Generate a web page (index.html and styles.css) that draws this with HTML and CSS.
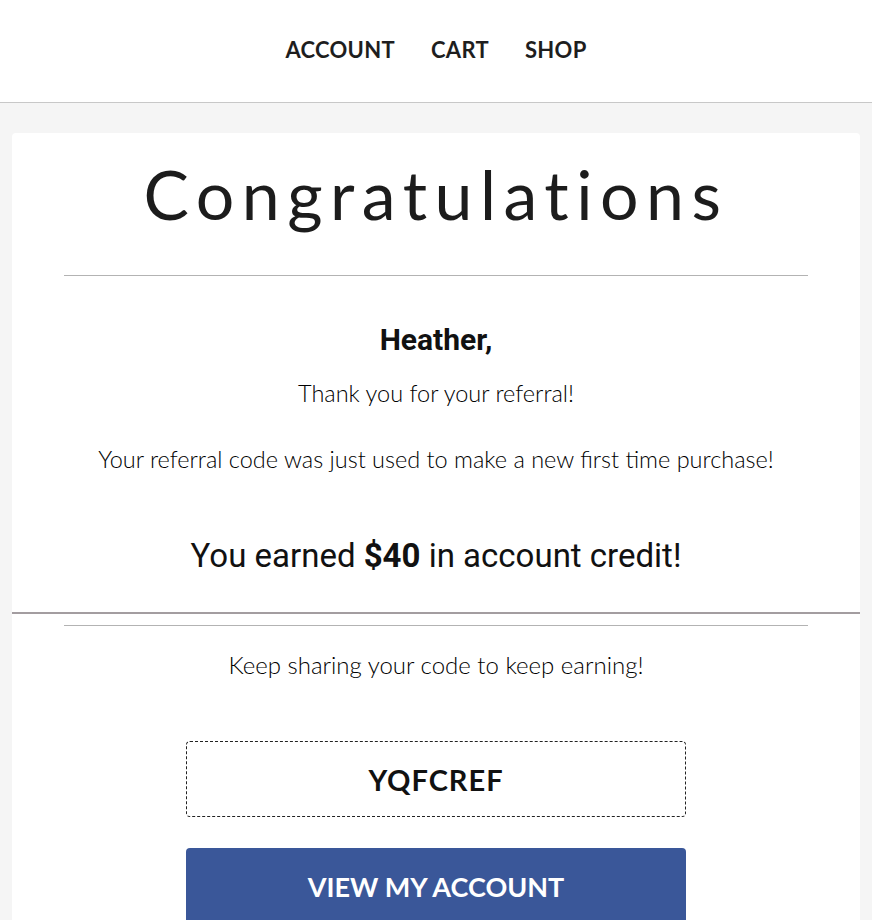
FILE: index.html
```html
<!DOCTYPE html>
<html lang="en">
<head>
    <meta charset="UTF-8" />
    <title>Congratulations</title>
    <link rel="stylesheet" href="styles.css">
</head>
<body>
    <header class="topbar">
        <nav class="nav">
            <a href="#">ACCOUNT</a>
            <a href="#">CART</a>
            <a href="#">SHOP</a>
        </nav>
    </header>
    <main class="page">
        <section class="card">
            <h1 class="title">Congratulations</h1>
            <hr class="rule rule-top">
            <p class="name">Heather,</p>
            <p class="text thanks">Thank you for your referral!</p>
            <p class="text used">Your referral code was just used to make a new first time purchase!</p>
            <p class="earned">You earned <strong>$40</strong> in account credit!</p>
            <hr class="split">
            <hr class="rule rule-bottom">
            <p class="text keep">Keep sharing your code to keep earning!</p>
            <div class="code">YQFCREF</div>
            <a class="btn" href="#">VIEW MY ACCOUNT</a>
        </section>
    </main>
</body>
</html>
```

FILE: styles.css
```css
*{margin:0;padding:0;box-sizing:border-box;}
body{background:#f5f5f5;font-family:"Lato","Open Sans",sans-serif;color:#111;}
a{text-decoration:none;}

.topbar{height:103px;background:#fff;border-bottom:1px solid #c8c8c8;}
.nav{height:102px;display:flex;justify-content:center;align-items:center;gap:36px;padding-bottom:4px;}
.nav a{font-weight:700;font-size:22px;color:#1e1e1e;letter-spacing:0.3px;}

.page{padding:30px 12px 0;}
.card{background:#fff;border-radius:4px;padding:21px 0 40px;text-align:center;}

/* wide tracking on the heading */
.title{font-weight:400;font-size:68px;line-height:80px;letter-spacing:7.5px;color:#1c1c1c;}

.rule{border:0;border-top:1px solid #b3b3b3;margin:0 52px;}
.rule-top{margin-top:41px;}
.rule-bottom{margin-top:11px;}
.split{border:0;border-top:2px solid #a39da0;margin-top:36px;}

.name{font-family:"Roboto",sans-serif;font-weight:700;font-size:30px;line-height:36px;margin-top:46px;}
.text{font-weight:300;font-size:23.5px;line-height:28px;color:#000;}
.thanks{margin-top:21px;}
.used{margin-top:38px;}
.keep{font-size:24px;margin-top:25px;}
.earned{font-family:"Roboto",sans-serif;font-size:33px;line-height:40px;margin-top:63px;}
.earned strong{font-weight:700;}

.code{width:500px;height:76px;margin:62px auto 0;border:1px dashed #222;border-radius:4px;display:flex;align-items:center;justify-content:center;font-weight:700;font-size:29px;letter-spacing:1px;color:#111;}
.btn{width:500px;height:76px;margin:31px auto 0;background:#3a5799;border-radius:4px;display:flex;align-items:center;justify-content:center;font-weight:700;font-size:27px;color:#fff;}
```
